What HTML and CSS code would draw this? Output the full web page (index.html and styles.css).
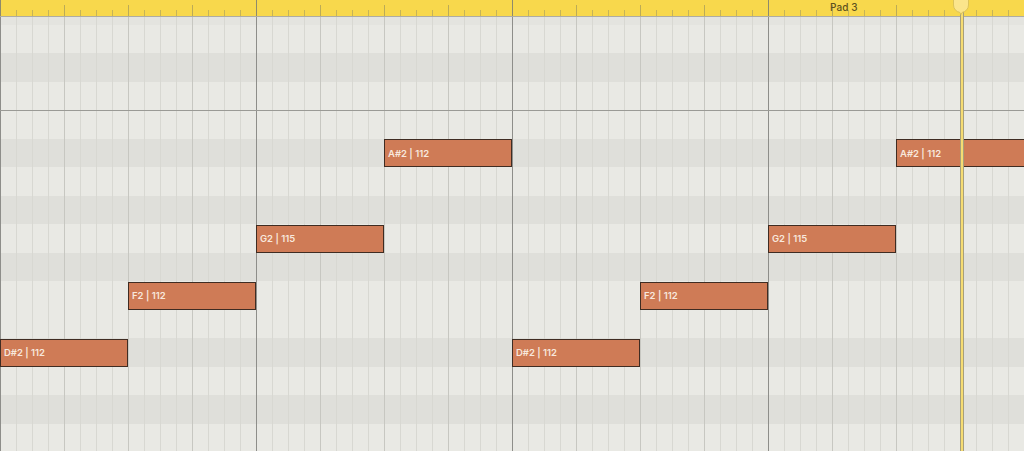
FILE: index.html
```html
<!DOCTYPE html>
<html lang="en">
<head>
<meta charset="utf-8">
<title>Piano Roll</title>
<link rel="stylesheet" href="styles.css">
</head>
<body>
<div class="roll">
  <header class="ruler">
    <span class="region-label">Pad 3</span>
  </header>
  <div class="grid">
    <div class="row partial"></div>
    <div class="row"></div>
    <div class="row black"></div>
    <div class="row"></div>
    <div class="row octave"></div>
    <div class="row black">
      <div class="note" style="left:384px;width:128px">A#2 | 112</div>
      <div class="note" style="left:896px;width:140px">A#2 | 112</div>
    </div>
    <div class="row"></div>
    <div class="row black"></div>
    <div class="row">
      <div class="note" style="left:256px;width:128px">G2 | 115</div>
      <div class="note" style="left:768px;width:128px">G2 | 115</div>
    </div>
    <div class="row black"></div>
    <div class="row">
      <div class="note" style="left:128px;width:128px">F2 | 112</div>
      <div class="note" style="left:640px;width:128px">F2 | 112</div>
    </div>
    <div class="row"></div>
    <div class="row black">
      <div class="note" style="left:0px;width:128px">D#2 | 112</div>
      <div class="note" style="left:512px;width:128px">D#2 | 112</div>
    </div>
    <div class="row"></div>
    <div class="row black"></div>
    <div class="row"></div>
  </div>
  <div class="playhead-line"></div>
  <svg class="playhead-head" width="18" height="16" viewBox="0 0 18 16">
    <path d="M1.5 -1 H16.5 V5 A7.5 7.5 0 0 1 10.2 12.4 L9 14.5 L7.8 12.4 A7.5 7.5 0 0 1 1.5 5 Z" fill="#fbe58c" stroke="#dcc35a" stroke-width="1"/>
  </svg>
</div>
</body>
</html>
```

FILE: styles.css
```css
html, body {
  margin: 0;
  padding: 0;
  width: 1024px;
  height: 451px;
  overflow: hidden;
  background: #e9e9e4;
}

.roll {
  position: relative;
  width: 1024px;
  height: 451px;
  overflow: hidden;
  font-family: Inter, "Noto Sans", "Liberation Sans", sans-serif;
}

.ruler {
  position: relative;
  height: 16px;
  border-bottom: 1px solid #aeaca2;
  background-color: #f8d84c;
  background-image:
    repeating-linear-gradient(to right, #8f8a6c 0 1px, transparent 1px 256px),
    repeating-linear-gradient(to right, #bcab56 0 1px, transparent 1px 64px),
    repeating-linear-gradient(to right, #c6b458 0 1px, transparent 1px 16px);
  background-size: 100% 16px, 100% 11px, 100% 6px;
  background-position: 0 0, 0 5px, 0 10px;
  background-repeat: no-repeat;
}

.region-label {
  position: absolute;
  left: 830px;
  top: 1px;
  font-size: 10px;
  font-weight: 500;
  line-height: 12px;
  color: #5e5120;
  letter-spacing: 0.1px;
}

.grid {
  display: flex;
  flex-direction: column;
  box-shadow: inset 0 1px 1px rgba(0, 0, 0, 0.06);
}

.row {
  position: relative;
  flex: none;
  height: 28.5px;
  box-sizing: border-box;
  background-color: #e9e9e4;
  background-image:
    repeating-linear-gradient(to right, #8e8e8a 0 1px, transparent 1px 256px),
    repeating-linear-gradient(to right, #c7c7c1 0 1px, transparent 1px 64px),
    repeating-linear-gradient(to right, #d8d8d2 0 1px, transparent 1px 16px);
}

.row.partial {
  height: 7.5px;
  background-color: #e4e4df;
}

.row.black {
  background-color: #dfdfda;
}

.row.octave {
  border-top: 1px solid #9a9a95;
}

.note {
  position: absolute;
  top: 0.5px;
  bottom: 0;
  box-sizing: border-box;
  display: flex;
  align-items: center;
  padding-left: 3px;
  background: #cf7b56;
  border: 1px solid #3f2c22;
  color: #f8e8dd;
  font-size: 9.5px;
  font-weight: 600;
  white-space: nowrap;
}

.playhead-line {
  position: absolute;
  top: 8px;
  bottom: 0;
  left: 960px;
  width: 2px;
  background: #f6dc72;
  border-left: 1px solid #a8a07a;
  border-right: 1px solid #a8a07a;
}

.playhead-head {
  position: absolute;
  top: 0;
  left: 952px;
  display: block;
}
```
